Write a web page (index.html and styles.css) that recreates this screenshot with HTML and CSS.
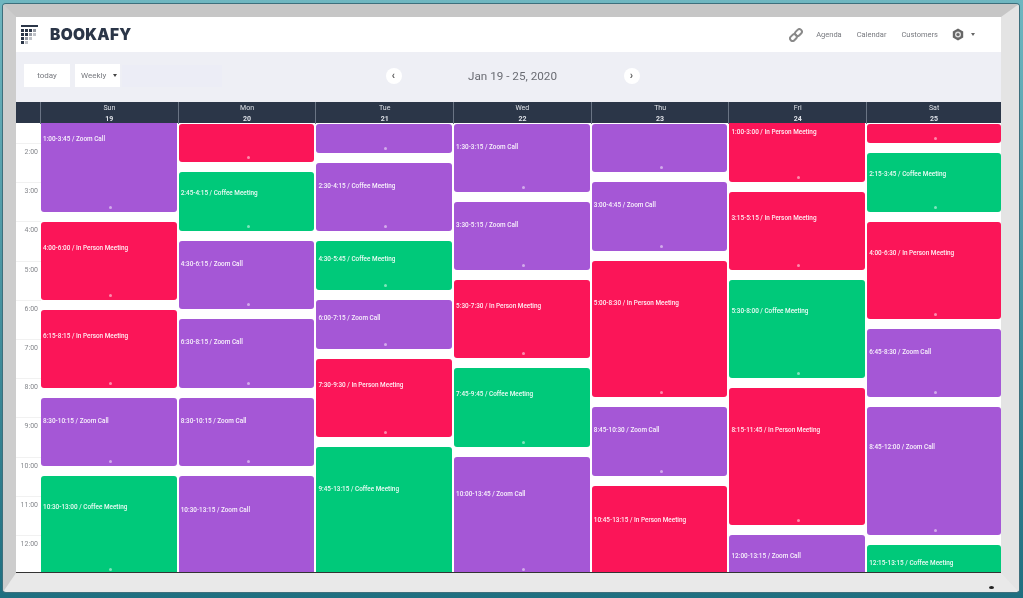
FILE: index.html
```html
<!DOCTYPE html>
<html lang="en">
<head>
    <meta charset="UTF-8">
    <meta name="viewport" content="width=device-width, initial-scale=1.0">
    <title>Bookafy</title>
    <link rel="stylesheet" href="styles.css">
</head>
<body>
    <div class="frame">
        <div class="app">
            <header class="topbar">
                <div class="brand">
                    <svg class="logo" width="17" height="19" viewBox="0 0 17 19">
                        <rect x="0" y="0" width="17" height="2" fill="#2b3648"/>
                        <g fill="#2b3648">
                            <rect x="0" y="4" width="3" height="3"/><rect x="4" y="4" width="3" height="3"/><rect x="8" y="4" width="3" height="3"/><rect x="12" y="4" width="3" height="3" opacity="0.5"/>
                            <rect x="0" y="8" width="3" height="3"/><rect x="4" y="8" width="3" height="3"/><rect x="8" y="8" width="3" height="3" opacity="0.5"/><rect x="12" y="8" width="3" height="3" opacity="0.3"/>
                            <rect x="0" y="12" width="3" height="3"/><rect x="4" y="12" width="3" height="3" opacity="0.5"/><rect x="8" y="12" width="3" height="3" opacity="0.3"/>
                            <rect x="0" y="16" width="3" height="3"/><rect x="4" y="16" width="3" height="3" opacity="0.3"/>
                        </g>
                    </svg>
                    <span class="brand-name">BOOKAFY</span>
                </div>
                <nav class="nav">
                    <svg class="link-icon" width="14" height="14" viewBox="0 0 14 14" fill="none" stroke="#8a8a8a" stroke-width="2">
                        <rect x="7" y="0.8" width="5" height="7.5" rx="2.5" transform="rotate(45 9.5 4.5)"/>
                        <rect x="2" y="5.8" width="5" height="7.5" rx="2.5" transform="rotate(45 4.5 9.5)"/>
                    </svg>
                    <a class="nav-link">Agenda</a>
                    <a class="nav-link">Calendar</a>
                    <a class="nav-link">Customers</a>
                    <div class="settings">
                        <svg width="12" height="13" viewBox="0 0 12 13">
                            <path d="M6 0.5 11.2 3.5V9.5L6 12.5 0.8 9.5V3.5Z" fill="#666"/>
                            <circle cx="6" cy="6.5" r="3" fill="#ddd"/>
                            <circle cx="6" cy="6.5" r="1.6" fill="#666"/>
                        </svg>
                        <span class="caret"></span>
                    </div>
                </nav>
            </header>

            <div class="toolbar">
                <div class="toolbar-left">
                    <button class="tool-btn">today</button>
                    <div class="tool-select">Weekly <span class="caret dark"></span></div>
                    <div class="search-ghost"></div>
                </div>
                <div class="week-nav">
                    <button class="round-btn">&#8249;</button>
                    <h2 class="week-title">Jan 19 - 25, 2020</h2>
                    <button class="round-btn">&#8250;</button>
                </div>
            </div>

            <div class="day-head">
                <div class="gutter-head"></div>
                <div class="day-name">Sun<b>19</b></div>
                <div class="day-name">Mon<b>20</b></div>
                <div class="day-name">Tue<b>21</b></div>
                <div class="day-name">Wed<b>22</b></div>
                <div class="day-name">Thu<b>23</b></div>
                <div class="day-name">Fri<b>24</b></div>
                <div class="day-name">Sat<b>25</b></div>
            </div>

            <div class="grid">
                <div class="gutter">
                    <div class="hour first"></div>
                    <div class="hour">2:00</div>
                    <div class="hour">3:00</div>
                    <div class="hour">4:00</div>
                    <div class="hour">5:00</div>
                    <div class="hour">6:00</div>
                    <div class="hour">7:00</div>
                    <div class="hour">8:00</div>
                    <div class="hour">9:00</div>
                    <div class="hour">10:00</div>
                    <div class="hour">11:00</div>
                    <div class="hour">12:00</div>
                </div>

                <div class="day">
                    <div class="event zoom cut" style="height:99px;margin-top:-11px"><span>1:00-3:45 / Zoom Call</span></div>
                    <div class="event person" style="height:78px"><span>4:00-6:00 / In Person Meeting</span></div>
                    <div class="event person" style="height:78px"><span>6:15-8:15 / In Person Meeting</span></div>
                    <div class="event zoom" style="height:68px"><span>8:30-10:15 / Zoom Call</span></div>
                    <div class="event coffee" style="height:98px"><span>10:30-13:00 / Coffee Meeting</span></div>
                </div>
                <div class="day">
                    <div class="event person" style="height:38px"></div>
                    <div class="event coffee" style="height:59px"><span>2:45-4:15 / Coffee Meeting</span></div>
                    <div class="event zoom" style="height:68px"><span>4:30-6:15 / Zoom Call</span></div>
                    <div class="event zoom" style="height:69px"><span>6:30-8:15 / Zoom Call</span></div>
                    <div class="event zoom" style="height:68px"><span>8:30-10:15 / Zoom Call</span></div>
                    <div class="event zoom" style="height:107px"><span>10:30-13:15 / Zoom Call</span></div>
                </div>
                <div class="day">
                    <div class="event zoom" style="height:29px"></div>
                    <div class="event zoom" style="height:68px"><span>2:30-4:15 / Coffee Meeting</span></div>
                    <div class="event coffee" style="height:49px"><span>4:30-5:45 / Coffee Meeting</span></div>
                    <div class="event zoom" style="height:49px"><span>6:00-7:15 / Zoom Call</span></div>
                    <div class="event person" style="height:78px"><span>7:30-9:30 / In Person Meeting</span></div>
                    <div class="event coffee" style="height:137px"><span>9:45-13:15 / Coffee Meeting</span></div>
                </div>
                <div class="day">
                    <div class="event zoom" style="height:68px"><span>1:30-3:15 / Zoom Call</span></div>
                    <div class="event zoom" style="height:68px"><span>3:30-5:15 / Zoom Call</span></div>
                    <div class="event person" style="height:78px"><span>5:30-7:30 / In Person Meeting</span></div>
                    <div class="event coffee" style="height:79px"><span>7:45-9:45 / Coffee Meeting</span></div>
                    <div class="event zoom" style="height:117px"><span>10:00-13:45 / Zoom Call</span></div>
                </div>
                <div class="day">
                    <div class="event zoom" style="height:48px"></div>
                    <div class="event zoom" style="height:69px"><span>3:00-4:45 / Zoom Call</span></div>
                    <div class="event person" style="height:136px"><span>5:00-8:30 / In Person Meeting</span></div>
                    <div class="event zoom" style="height:69px"><span>8:45-10:30 / Zoom Call</span></div>
                    <div class="event person" style="height:107px"><span>10:45-13:15 / In Person Meeting</span></div>
                </div>
                <div class="day">
                    <div class="event person cut" style="height:69px;margin-top:-11px"><span>1:00-3:00 / In Person Meeting</span></div>
                    <div class="event person" style="height:78px"><span>3:15-5:15 / In Person Meeting</span></div>
                    <div class="event coffee" style="height:98px"><span>5:30-8:00 / Coffee Meeting</span></div>
                    <div class="event person" style="height:137px"><span>8:15-11:45 / In Person Meeting</span></div>
                    <div class="event zoom" style="height:60px"><span>12:00-13:15 / Zoom Call</span></div>
                </div>
                <div class="day">
                    <div class="event person" style="height:19px"></div>
                    <div class="event coffee" style="height:59px"><span>2:15-3:45 / Coffee Meeting</span></div>
                    <div class="event person" style="height:97px"><span>4:00-6:30 / In Person Meeting</span></div>
                    <div class="event zoom" style="height:68px"><span>6:45-8:30 / Zoom Call</span></div>
                    <div class="event zoom" style="height:128px"><span>8:45-12:00 / Zoom Call</span></div>
                    <div class="event coffee" style="height:50px"><span>12:15-13:15 / Coffee Meeting</span></div>
                </div>
            </div>
        </div>
        <span class="frame-dot"></span>
    </div>
</body>
</html>
```

FILE: styles.css
```css
* {
    margin: 0;
    padding: 0;
    box-sizing: border-box;
}

html, body {
    height: 100%;
    overflow: hidden;
}

body {
    font-family: Roboto, "Liberation Sans", sans-serif;
    background: linear-gradient(180deg, #6fb6c0 0%, #1f6f80 100%);
    padding: 4px 4px 6px 3px;
}

.frame {
    position: relative;
    height: 100%;
    border-style: solid;
    border-width: 13px 18px 19px 13px;
    border-color: #c6c6c6 #e4e4e4 #e9e9e9 #cdcdcd;
    border-radius: 3px;
    box-shadow: 0 0 0 1px #3d6f7c;
}

.frame-dot {
    position: absolute;
    right: 7px;
    bottom: -16px;
    width: 5px;
    height: 3px;
    border-radius: 50%;
    background: #222;
}

.app {
    height: 100%;
    display: flex;
    flex-direction: column;
    background: #fff;
    overflow: hidden;
    filter: blur(0.5px);
}

.topbar {
    height: 35px;
    flex: none;
    display: flex;
    align-items: center;
    justify-content: space-between;
    padding: 0 26px 0 5px;
}

.brand {
    display: flex;
    align-items: center;
    gap: 12px;
}

.brand-name {
    font-family: Inter, sans-serif;
    font-weight: 900;
    font-size: 15.5px;
    letter-spacing: 0.3px;
    color: #2b3648;
}

.nav {
    display: flex;
    align-items: center;
    gap: 15px;
}

.nav-link {
    font-size: 7.5px;
    color: #77797f;
}

.link-icon {
    margin-right: -2px;
}

.settings {
    display: flex;
    align-items: center;
    gap: 7px;
    margin-left: -1px;
}

.caret {
    display: inline-block;
    border-left: 2.5px solid transparent;
    border-right: 2.5px solid transparent;
    border-top: 3px solid #666;
}

.caret.dark {
    border-top-color: #444;
}

.toolbar {
    height: 50px;
    flex: none;
    background: #eeeff5;
    display: grid;
    grid-template-columns: 1fr auto 1fr;
    align-items: center;
    padding: 0 0 3px 8px;
}

.toolbar-left {
    display: flex;
    align-items: center;
    gap: 5px;
}

.tool-btn, .tool-select {
    height: 23px;
    background: #fff;
    border: none;
    font-family: inherit;
    font-size: 8px;
    color: #77797f;
    display: flex;
    align-items: center;
}

.tool-btn {
    width: 46px;
    justify-content: center;
}

.tool-select {
    width: 45px;
    justify-content: space-between;
    padding: 0 3px 0 6px;
}

.search-ghost {
    width: 100px;
    height: 22px;
    margin-left: -3px;
    background: #ecedf6;
}

.week-nav {
    display: flex;
    align-items: center;
    gap: 30px;
}

.week-title {
    font-size: 11.7px;
    font-weight: 400;
    color: #6a6c73;
    width: 162px;
    text-align: center;
}

.round-btn {
    width: 16px;
    height: 16px;
    border: none;
    border-radius: 50%;
    background: #fff;
    color: #666;
    font-size: 10px;
    font-weight: 700;
    line-height: 14px;
}

.day-head {
    height: 21px;
    flex: none;
    display: grid;
    grid-template-columns: 25px repeat(6, 137.7px) 1fr;
    background: #2b3648;
    color: #dfe2e8;
}

.gutter-head,
.day-name {
    border-right: 1px solid #6a7484;
}

.day-name:last-child {
    border-right: none;
}

.day-name {
    padding-top: 1px;
    font-size: 7px;
    line-height: 10.5px;
    text-align: center;
}

.day-name b {
    display: block;
    font-weight: 700;
}

.grid {
    flex: 1;
    min-height: 0;
    display: grid;
    grid-template-columns: 25px repeat(6, 137.7px) 1fr;
    overflow: hidden;
    border-bottom: 1px solid #333;
}

.gutter {
    overflow: hidden;
}

.hour {
    height: 39.2px;
    padding: 4px 3px 0 0;
    border-top: 1px solid #f1f1f1;
    text-align: right;
    font-size: 7px;
    color: #85878c;
}

.hour.first {
    height: 20px;
    border-top: none;
}

.day {
    display: flex;
    flex-direction: column;
    gap: 10px;
    padding: 1px 2px 0 0;
    overflow: hidden;
}

.day:last-child {
    padding-right: 0;
}

.event {
    position: relative;
    flex: none;
    display: grid;
    grid-template-rows: 28% auto;
    padding: 0 2px;
    border-radius: 3px;
    color: #fff;
    font-size: 6.4px;
    font-weight: 500;
}

.event span {
    grid-row: 2;
    white-space: nowrap;
    opacity: 0.92;
}

.event.cut {
    grid-template-rows: 22% auto;
}

.event::after {
    content: "";
    position: absolute;
    left: 50%;
    bottom: 3px;
    width: 3px;
    height: 3px;
    border-radius: 50%;
    background: rgba(255, 255, 255, 0.5);
}

.zoom {
    background: #a557d6;
}

.person {
    background: #fb1558;
}

.coffee {
    background: #00c97a;
}
```
